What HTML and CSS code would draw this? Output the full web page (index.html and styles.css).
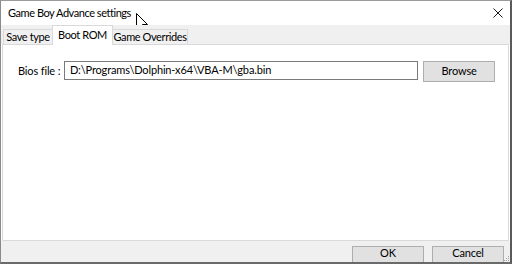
FILE: index.html
```html
<!DOCTYPE html>
<html>
<head>
<meta charset="utf-8">
<link rel="stylesheet" href="styles.css">
</head>
<body>
<div class="window">
  <div class="titlebar">
    <span class="title">Game Boy Advance settings</span>
    <svg class="close" width="10" height="10" viewBox="0 0 10 10"><path d="M0.5 0.5L9.5 9.5M9.5 0.5L0.5 9.5" stroke="#1a1a1a" stroke-width="1"/></svg>
  </div>
  <div class="tabs">
    <div class="tab tab-save">Save type</div>
    <div class="tab tab-boot active">Boot ROM</div>
    <div class="tab tab-game">Game Overrides</div>
  </div>
  <div class="panel">
    <div class="row">
      <label class="label">Bios file :</label>
      <div class="input">D:\Programs\Dolphin-x64\VBA-M\gba.bin</div>
      <div class="btn browse">Browse</div>
    </div>
  </div>
  <div class="bottombar">
    <div class="btn dlg">OK</div>
    <div class="btn dlg">Cancel</div>
    <svg class="grip" width="7" height="7" viewBox="0 0 7 7"><rect x="5" y="1" width="1" height="1" fill="#a0a0a0"/><rect x="3" y="3" width="1" height="1" fill="#a0a0a0"/><rect x="5" y="3" width="1" height="1" fill="#a0a0a0"/><rect x="1" y="5" width="1" height="1" fill="#a0a0a0"/><rect x="3" y="5" width="1" height="1" fill="#a0a0a0"/><rect x="5" y="5" width="1" height="1" fill="#a0a0a0"/></svg>
  </div>
  <svg class="cursor" width="12" height="19" viewBox="0 0 12 19"><path d="M0.5 0.5V16.5L4.5 12.5L7 18L9 17L6.5 11.5H11.5Z" fill="#fff" stroke="#000" stroke-width="1" stroke-linejoin="round"/></svg>
</div>
</body>
</html>
```
FILE: styles.css
```css
html, body {
  margin: 0;
  padding: 0;
  width: 512px;
  height: 264px;
  overflow: hidden;
  background: #fff;
}
.window {
  position: relative;
  width: 512px;
  height: 264px;
  box-sizing: border-box;
  border-top: 1px solid #9a9a9a;
  border-left: 1px solid #8a8a8a;
  border-right: 2px solid #5a5a5a;
  border-bottom: 2px solid #6a6a6a;
  display: flex;
  flex-direction: column;
  font-family: Lato, "Liberation Sans", sans-serif;
  font-size: 11px;
  letter-spacing: -0.15px;
  color: #000;
  overflow: hidden;
}
.titlebar {
  height: 24px;
  flex: none;
  background: #fff;
  display: flex;
  align-items: center;
  padding-left: 7px;
  padding-right: 7px;
}
.title {
  flex: 1;
  line-height: 14px;
  font-size: 11px;
  letter-spacing: -0.45px;
}
.close {
  display: block;
}
.tabs {
  height: 19px;
  flex: none;
  background: #f0f0f0;
  display: flex;
  align-items: flex-end;
  padding-left: 2px;
  position: relative;
  z-index: 1;
}
.tab {
  height: 15px;
  box-sizing: border-box;
  border: 1px solid #d9d9d9;
  border-bottom: none;
  line-height: 13px;
  background: #f0f0f0;
  text-align: center;
  white-space: nowrap;
  letter-spacing: -0.4px;
}
.tab + .tab {
  margin-left: -1px;
}
.tab-save { width: 50px; }
.tab-boot { width: 61px; }
.tab-game { width: 76px; }
.tab.active {
  height: 20px;
  margin-bottom: -1px;
  background: #fff;
  padding-top: 2px;
  line-height: 13px;
  position: relative;
}
.panel {
  flex: 1;
  margin: 0 1px 0 1px;
  background: #fff;
  border: 1px solid #d9d9d9;
  padding: 16px 13px 0 15px;
}
.row {
  display: flex;
  align-items: flex-start;
}
.label {
  width: 46px;
  line-height: 14px;
  margin-top: 3px;
  white-space: nowrap;
}
.input {
  width: 355px;
  height: 19px;
  box-sizing: border-box;
  border: 1px solid #7a7a7a;
  padding: 0 5px;
  line-height: 16px;
  white-space: nowrap;
  overflow: hidden;
}
.btn {
  box-sizing: border-box;
  background: #e1e1e1;
  border: 1px solid #adadad;
  text-align: center;
}
.browse {
  width: 72px;
  height: 21px;
  margin-left: 5px;
  line-height: 18px;
}
.bottombar {
  height: 21px;
  flex: none;
  background: #f0f0f0;
  display: flex;
  justify-content: flex-end;
  align-items: flex-start;
  gap: 8px;
  padding: 5px 6px 0 0;
  box-sizing: border-box;
  position: relative;
}
.dlg {
  width: 72px;
  height: 23px;
  line-height: 12px;
  flex: none;
}
.grip {
  position: absolute;
  right: 0;
  bottom: 0;
}
.cursor {
  position: absolute;
  left: 135px;
  top: 12px;
}
```
